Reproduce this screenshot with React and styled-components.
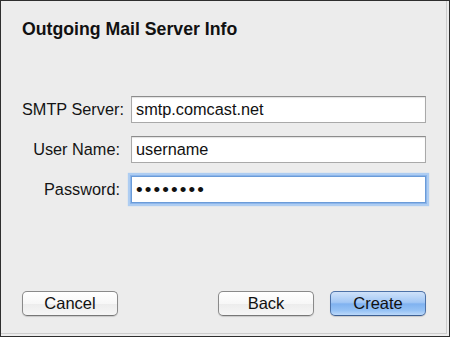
import React from 'react';
import styled, { createGlobalStyle, css } from 'styled-components';

// Global reset
const GlobalStyle = createGlobalStyle`
  html, body {
    margin: 0;
    padding: 0;
    background: #ececec;
  }
  * {
    box-sizing: border-box;
  }
`;

const Frame = styled.div`
  width: 450px;
  height: 337px;
  border: 1px solid #2e2e2e;
  padding: 0 2px 2px 0;
  background: #ececec;
  font-family: "Liberation Sans", Arial, sans-serif;
  color: #1a1a1a;
`;

const Panel = styled.div`
  height: 100%;
  display: flex;
  flex-direction: column;
  border-right: 1px solid #cdcdcd;
  border-bottom: 1px solid #cdcdcd;
  padding: 0 20px 17px 21px;
`;

const Title = styled.h1`
  margin: 18px 0 0;
  font-size: 17.7px;
  line-height: 20px;
  font-weight: bold;
  color: #111;
`;

const Form = styled.div`
  display: grid;
  grid-template-columns: 98px 1fr;
  column-gap: 11px;
  row-gap: 13px;
  align-items: center;
  margin-top: 57px;
`;

const Label = styled.label`
  font-size: 16.3px;
  text-align: right;
  white-space: nowrap;
  color: #141414;
`;

const Field = styled.input`
  height: 27px;
  width: 100%;
  padding: 0 4px;
  font-family: "Liberation Sans", Arial, sans-serif;
  font-size: 16.3px;
  color: #111;
  background: #fff;
  border: 1px solid #a9a9a9;
  border-top-color: #8c8c8c;
  box-shadow: inset 0 1px 1px rgba(0, 0, 0, 0.12);
  outline: none;

  ${(p) => p.$secret && css`
    font-size: 19px;
    letter-spacing: 2.1px;
  `}

  ${(p) => p.$focused && css`
    border-color: #6a9bd8;
    box-shadow: 0 0 0 1px #8db6ea, 0 0 1px 3px #aecdf2;
  `}
`;

const Footer = styled.div`
  margin-top: auto;
  display: flex;
  align-items: center;
  gap: 16px;
`;

const Spacer = styled.div`
  flex: 1;
`;

const Button = styled.button`
  width: 96px;
  height: 25px;
  padding: 0;
  border-radius: 5px;
  font-family: "Liberation Sans", Arial, sans-serif;
  font-size: 16.5px;
  color: #111;
  border: 1px solid #8a8a8a;
  border-bottom-color: #777;
  background: linear-gradient(#ffffff 0%, #f7f7f7 50%, #ececec 51%, #f6f6f6 100%);
  box-shadow: 0 1px 1px rgba(0, 0, 0, 0.15);

  ${(p) => p.$primary && css`
    border-color: #4d72a8;
    border-bottom-color: #3d5f93;
    background: linear-gradient(#cfe2fa 0%, #a2c7f5 45%, #80b2f0 52%, #96c2f5 80%, #bcd9fa 100%);
  `}
`;

export default function App() {
  return (
    <>
      <GlobalStyle />
      <Frame>
        <Panel>
          <Title>Outgoing Mail Server Info</Title>

          <Form>
            <Label>SMTP Server:</Label>
            <Field readOnly defaultValue="smtp.comcast.net" />

            <Label>User Name:</Label>
            <Field readOnly defaultValue="username" />

            <Label>Password:</Label>
            <Field readOnly type="password" defaultValue="password" $secret $focused />
          </Form>

          <Footer>
            <Button>Cancel</Button>
            <Spacer />
            <Button>Back</Button>
            <Button $primary>Create</Button>
          </Footer>
        </Panel>
      </Frame>
    </>
  );
}
